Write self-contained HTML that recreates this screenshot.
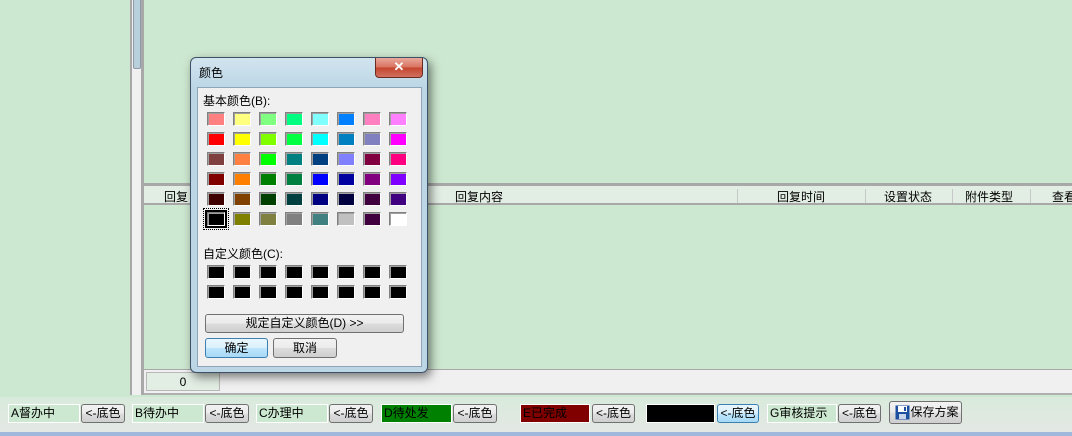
<!DOCTYPE html>
<html><head><meta charset="utf-8"><style>
*{margin:0;padding:0;box-sizing:border-box}
body{width:1072px;height:436px;overflow:hidden;background:#cde8d0;font-family:"Liberation Sans","Noto Sans CJK SC",sans-serif;font-size:12px;color:#000;position:relative;white-space:nowrap}
.a{position:absolute}
.sw{position:absolute;width:18px;height:14px;border:1px solid;border-color:#808080 #fff #fff #808080;box-shadow:inset 1px 1px 0 #a0a0a0}
.btn{position:absolute;border:1px solid #707070;border-radius:3px;background:linear-gradient(#f2f2f2,#ebebeb 50%,#dddddd 50%,#cfcfcf);text-align:center;font-size:12px}
.fld{position:absolute;height:19px;border:1px solid #fff;background:#cde8d0;font-size:12px;line-height:17px;padding-left:2px;top:404px}
</style></head><body>
<!-- left panel -->
<div class="a" style="left:0;top:0;width:132px;height:395px;background:#cde8d0;border-right:2px solid #a8a8a8"></div>
<div class="a" style="left:132px;top:0;width:9px;height:395px;background:#f0f0f0"></div>
<div class="a" style="left:133px;top:0;width:8px;height:69px;background:#b8d0dc;border:1px solid #909aa8;border-top:none;border-radius:0 0 2px 2px"></div>
<div class="a" style="left:141px;top:0;width:3px;height:395px;background:#a8a8a8"></div>
<!-- main top -->
<div class="a" style="left:144px;top:183px;width:928px;height:3px;background:#a8a8a8"></div>
<div class="a" style="left:144px;top:186px;width:928px;height:19px;background:#e2ede3;border-bottom:2px solid #a8a8a8"></div>
<div class="a" style="left:164px;top:188px">回复</div>
<div class="a" style="left:455px;top:188px">回复内容</div>
<div class="a" style="left:737px;top:189px;width:1px;height:14px;background:#c8c8c8"></div>
<div class="a" style="left:777px;top:188px">回复时间</div>
<div class="a" style="left:865px;top:189px;width:1px;height:14px;background:#c8c8c8"></div>
<div class="a" style="left:884px;top:188px">设置状态</div>
<div class="a" style="left:952px;top:189px;width:1px;height:14px;background:#c8c8c8"></div>
<div class="a" style="left:965px;top:188px">附件类型</div>
<div class="a" style="left:1030px;top:189px;width:1px;height:14px;background:#c8c8c8"></div>
<div class="a" style="left:1052px;top:188px">查看</div>
<div class="a" style="left:144px;top:369px;width:928px;height:26px;background:#f0f0f0;border-top:1px solid #a8a8a8;border-bottom:2px solid #b0b0b0"></div>
<div class="a" style="left:146px;top:372px;width:74px;height:19px;background:#e2ede3;border:1px solid #b8b8b8;text-align:center;line-height:18px">0</div>
<!-- bottom bar -->
<div class="a" style="left:0;top:397px;width:1072px;height:35px;background:linear-gradient(#d8eadb,#e4e8e4)"></div>
<div class="a" style="left:0;top:432px;width:1072px;height:4px;background:#9fb8dc"></div>
<div class="fld" style="left:8px;width:72px">A督办中</div>
<div class="btn" style="left:81px;top:404px;width:44px;height:19px;line-height:17px">&lt;-底色</div>
<div class="fld" style="left:132px;width:72px">B待办中</div>
<div class="btn" style="left:205px;top:404px;width:44px;height:19px;line-height:17px">&lt;-底色</div>
<div class="fld" style="left:256px;width:72px">C办理中</div>
<div class="btn" style="left:329px;top:404px;width:44px;height:19px;line-height:17px">&lt;-底色</div>
<div class="fld" style="left:381px;width:71px;background:#008000">D待处发</div>
<div class="btn" style="left:453px;top:404px;width:44px;height:19px;line-height:17px">&lt;-底色</div>
<div class="fld" style="left:520px;width:70px;background:#800000">E已完成</div>
<div class="btn" style="left:592px;top:404px;width:43px;height:19px;line-height:17px">&lt;-底色</div>
<div class="fld" style="left:646px;width:69px;background:#000"></div>
<div class="btn" style="left:717px;top:404px;width:42px;height:19px;line-height:17px;border-color:#3c7fb1;background:linear-gradient(#eaf6fd,#d9f0fc 50%,#bee6fd 50%,#a7d9f5)">&lt;-底色</div>
<div class="fld" style="left:767px;width:70px">G审核提示</div>
<div class="btn" style="left:838px;top:404px;width:43px;height:19px;line-height:17px">&lt;-底色</div>
<div class="btn" style="left:889px;top:401px;width:73px;height:23px;line-height:21px;padding-left:18px">保存方案
<svg style="position:absolute;left:5px;top:3px" width="15" height="15" viewBox="0 0 15 15"><rect x="0.5" y="0.5" width="14" height="14" fill="#1d4fa0"/><rect x="3" y="1" width="9" height="6" fill="#fff"/><rect x="4" y="9" width="7" height="5" fill="#c8d4ea"/><rect x="9" y="2" width="2" height="4" fill="#1d4fa0"/></svg></div>
<!-- dialog -->
<div class="a" style="left:190px;top:57px;width:238px;height:316px;border:1px solid #3c5066;border-radius:6px;background:linear-gradient(#d2e5ef,#bcd6e6 30px,#bcd6e6);box-shadow:3px 4px 10px rgba(0,0,0,.5)"></div>
<div class="a" style="left:199px;top:64px;font-size:12px">颜色</div>
<div class="a" style="left:375px;top:58px;width:48px;height:20px;border:1px solid #6b2a20;border-top:none;border-radius:0 0 4px 4px;background:linear-gradient(#e9a99c,#d8715e 50%,#c4432c 50%,#d07060);color:#fff;text-align:center;font-weight:bold;font-size:13px;line-height:18px">✕</div>
<div class="a" style="left:197px;top:87px;width:225px;height:280px;background:#f0f0f0;border:1px solid #8ea4b8"></div>
<div class="a" style="left:203px;top:92px">基本颜色(B):</div>
<div id="sw"></div>
<div class="a" style="left:203px;top:245px">自定义颜色(C):</div>
<div class="btn" style="left:205px;top:314px;width:199px;height:19px;line-height:17px">规定自定义颜色(D) &gt;&gt;</div>
<div class="btn" style="left:205px;top:338px;width:63px;height:20px;line-height:18px;border-color:#3c7fb1;background:linear-gradient(#eaf6fd,#d9f0fc 50%,#bee6fd 50%,#a7d9f5)">确定</div>
<div class="btn" style="left:273px;top:338px;width:64px;height:20px;line-height:18px">取消</div>
<script>
var c=[["#ff8080","#ffff80","#80ff80","#00ff80","#80ffff","#0080ff","#ff80c0","#ff80ff"],
["#ff0000","#ffff00","#80ff00","#00ff40","#00ffff","#0080c0","#8080c0","#ff00ff"],
["#804040","#ff8040","#00ff00","#008080","#004080","#8080ff","#800040","#ff0080"],
["#800000","#ff8000","#008000","#008040","#0000ff","#0000a0","#800080","#8000ff"],
["#400000","#804000","#004000","#004040","#000080","#000040","#400040","#400080"],
["#000000","#808000","#808040","#808080","#408080","#c0c0c0","#400040","#ffffff"]];
var ys=[112,132,152,172,192,212],h="";
for(var r=0;r<6;r++)for(var i=0;i<8;i++)h+='<div class="sw" style="left:'+(207+i*26)+'px;top:'+ys[r]+'px;background:'+c[r][i]+'"></div>';
[265,285].forEach(function(y){for(var i=0;i<8;i++)h+='<div class="sw" style="left:'+(207+i*26)+'px;top:'+y+'px;background:#000"></div>';});
h+='<div class="a" style="left:203px;top:208px;width:26px;height:22px;border:1px dotted #000"></div><div class="a" style="left:205px;top:210px;width:22px;height:18px;border:2px solid #000"></div>';
document.getElementById("sw").innerHTML=h;
</script>
</body></html>
